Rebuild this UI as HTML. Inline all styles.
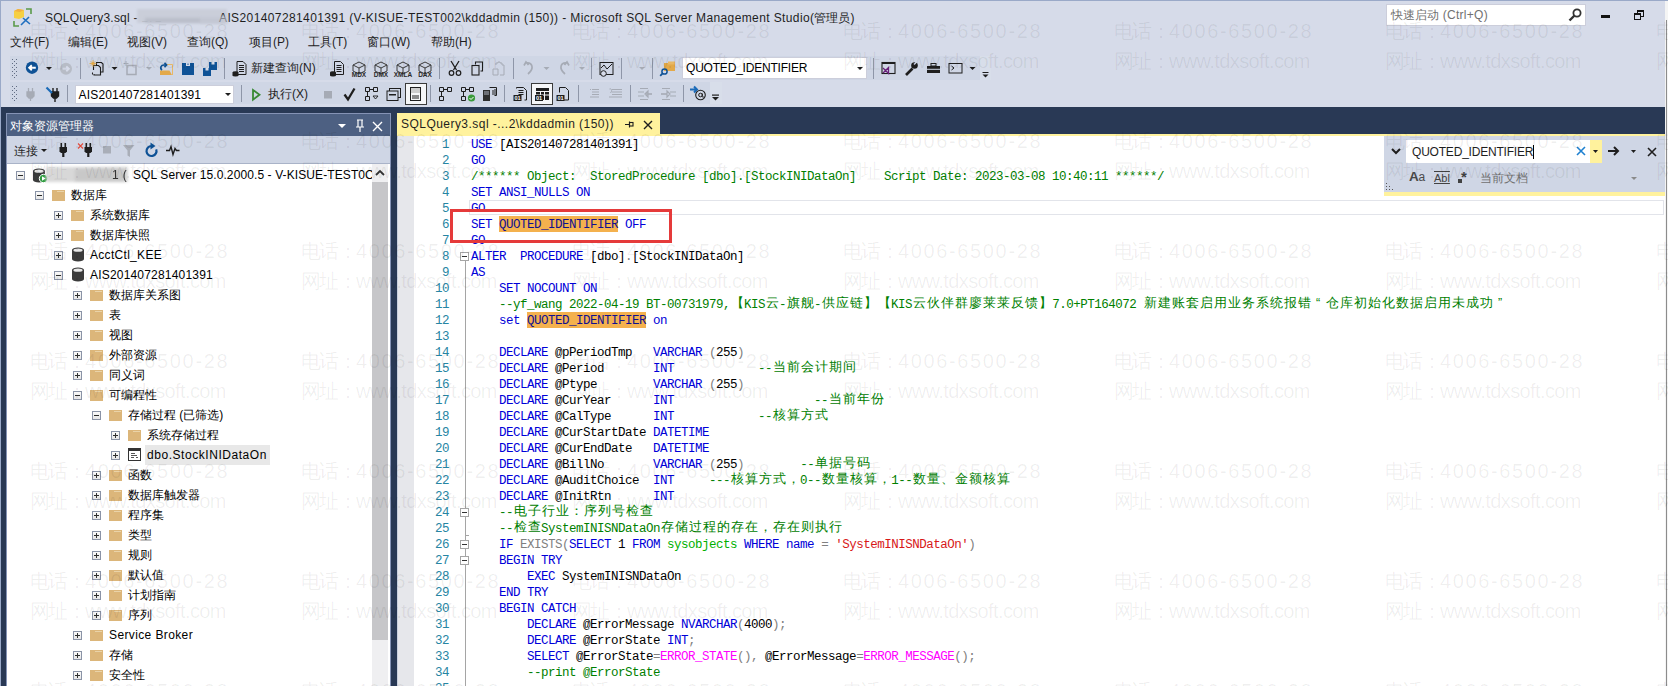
<!DOCTYPE html><html><head><meta charset="utf-8"><style>
*{margin:0;padding:0;box-sizing:border-box}
html,body{width:1668px;height:686px;overflow:hidden}
body{position:relative;background:#D6DBE9;font-family:"Liberation Sans",sans-serif;font-size:12px;color:#1E1E1E}
.a{position:absolute}
i{font-style:normal;display:inline-block;text-align:center}
.t{position:absolute;white-space:pre;line-height:14px;letter-spacing:.35px}
.tr{position:absolute;white-space:pre;line-height:14px;letter-spacing:.4px;color:#000}
.cd{position:absolute;left:471px;margin-top:1px;white-space:pre;font-family:"Liberation Mono",monospace;font-size:12.5px;letter-spacing:-0.5px;line-height:16px;color:#000}
.cd i{width:14px;font-family:"Liberation Sans",sans-serif;font-size:12.5px;letter-spacing:0;vertical-align:top;height:16px;line-height:16px;position:relative;top:-2px}
.ln{position:absolute;left:418px;margin-top:1px;width:31px;text-align:right;white-space:pre;font-family:"Liberation Mono",monospace;font-size:12.5px;letter-spacing:-0.5px;line-height:16px;color:#2685A3}
.k{color:#0000D8}.k.hl{color:#101090}.g{color:#808080}.c{color:#008000}.s{color:#D81818}.m{color:#FF00FF}.l{color:#00B000}
.hl{}
.ex{position:absolute;width:9px;height:9px;border:1px solid #8A93A6;background:linear-gradient(#FAFAFA,#E6E6E6)}
.ex:before{content:"";position:absolute;left:1px;top:3px;width:5px;height:1px;background:#2A2A2A}
.ex.p:after{content:"";position:absolute;left:3px;top:1px;width:1px;height:5px;background:#333}
.fd{position:absolute;width:13px;height:11px;background:#DCB67A;margin-top:1px}
.fd:before{content:"";position:absolute;left:5px;top:1px;width:7px;height:1px;background:#EAD3A8}
.fx{position:absolute;left:460px;width:9px;height:9px;border:1px solid #A5A5A5;background:#fff}
.fx:before{content:"";position:absolute;left:1px;top:3px;width:5px;height:1px;background:#333}
.wm{position:absolute;white-space:pre;font-size:20px;line-height:20px;color:rgba(0,0,0,.065);pointer-events:none;-webkit-text-stroke:.3px rgba(0,0,0,.03);letter-spacing:1.65px}
.wm i{width:18.3px;letter-spacing:0}
.sep{position:absolute;width:1px;background:#A8B1C6}
</style></head><body><div class="a" style="left:0;top:0;width:1668px;height:1px;background:#9AA9C8"></div><div class="a" style="left:0;top:0;width:1px;height:686px;background:#9AA9C8"></div><svg class="a" style="left:13px;top:8px" width="20" height="20" viewBox="0 0 20 20">
<path d="M1 3 L5 1 L11 2 L11 9 L6 11 L1 10 Z" fill="#F6CF43"/><path d="M5 1 L11 2 L7 4 L1 3Z" fill="#F1AE42"/>
<path d="M13 1h5v5" stroke="#5A9A4A" stroke-width="1.6" fill="none"/><path d="M1 13v5h5" stroke="#5A9A4A" stroke-width="1.6" fill="none"/>
<path d="M8 17 L16 9 M10 10 L17 16" stroke="#1F6FC0" stroke-width="1.6"/></svg><div class="t" style="left:45px;top:11px;letter-spacing:.22px">SQLQuery3.sql - 172</div><div class="a" style="left:137px;top:9px;width:90px;height:14px;background:#CACED9;filter:blur(1px)"></div><div class="a" style="left:145px;top:18px;width:80px;height:5px;background:#A9AEBB;filter:blur(1.5px);opacity:.5"></div><div class="t" style="left:219px;top:11px;letter-spacing:.39px">AIS201407281401391 (V-KISUE-TEST002\kddadmin (150)) - Microsoft SQL Server Management Studio(<i style="width:12px">管</i><i style="width:12px">理</i><i style="width:12px">员</i>)</div><div class="a" style="left:200px;top:16px;width:28px;height:8px;background:#C9CDD9;filter:blur(1px);opacity:.6"></div><div class="t" style="left:10px;top:35px;letter-spacing:0"><i style="width:12px">文</i><i style="width:12px">件</i>(F)</div><div class="t" style="left:68px;top:35px;letter-spacing:0"><i style="width:12px">编</i><i style="width:12px">辑</i>(E)</div><div class="t" style="left:127px;top:35px;letter-spacing:0"><i style="width:12px">视</i><i style="width:12px">图</i>(V)</div><div class="t" style="left:187px;top:35px;letter-spacing:0"><i style="width:12px">查</i><i style="width:12px">询</i>(Q)</div><div class="t" style="left:249px;top:35px;letter-spacing:0"><i style="width:12px">项</i><i style="width:12px">目</i>(P)</div><div class="t" style="left:308px;top:35px;letter-spacing:0"><i style="width:12px">工</i><i style="width:12px">具</i>(T)</div><div class="t" style="left:367px;top:35px;letter-spacing:0"><i style="width:12px">窗</i><i style="width:12px">口</i>(W)</div><div class="t" style="left:431px;top:35px;letter-spacing:0"><i style="width:12px">帮</i><i style="width:12px">助</i>(H)</div><div class="a" style="left:1386px;top:4px;width:200px;height:22px;background:#fff;border:1px solid #CCCEDB"></div><div class="t" style="left:1391px;top:8px;color:#717171;letter-spacing:.3px"><i style="width:12px">快</i><i style="width:12px">速</i><i style="width:12px">启</i><i style="width:12px">动</i> (Ctrl+Q)</div><svg class="a" style="left:1568px;top:8px" width="14" height="14"><circle cx="9" cy="5" r="3.6" stroke="#333" stroke-width="1.8" fill="none"/><path d="M6.5 7.5 L1.5 12.5" stroke="#333" stroke-width="2.4"/></svg><div class="a" style="left:1601px;top:15px;width:9px;height:3px;background:#111"></div><div class="a" style="left:1637px;top:10px;width:7px;height:7px;border:1.5px solid #111;border-top-width:2.5px"></div><div class="a" style="left:1634px;top:13px;width:7px;height:7px;border:1.5px solid #111;border-top-width:2.5px;background:#D6DBE9"></div><div class="a" style="left:10px;top:56px;width:970px;height:24px;background:#CFD6E5"></div><div class="a" style="left:10px;top:82px;width:700px;height:22px;background:#CFD6E5"></div><div class="a" style="left:980px;top:56px;width:11px;height:24px;background:#D8DEEA"></div><div class="a" style="left:710px;top:82px;width:12px;height:22px;background:#D8DEEA"></div><svg class="a" style="left:0;top:54px" width="1000" height="28"><rect x="12" y="5" width="1" height="1" fill="#5F6B82"/><rect x="16" y="5" width="1" height="1" fill="#5F6B82"/><rect x="14" y="7" width="1" height="1" fill="#5F6B82"/><rect x="12" y="9" width="1" height="1" fill="#5F6B82"/><rect x="16" y="9" width="1" height="1" fill="#5F6B82"/><rect x="14" y="11" width="1" height="1" fill="#5F6B82"/><rect x="12" y="13" width="1" height="1" fill="#5F6B82"/><rect x="16" y="13" width="1" height="1" fill="#5F6B82"/><rect x="14" y="15" width="1" height="1" fill="#5F6B82"/><rect x="12" y="17" width="1" height="1" fill="#5F6B82"/><rect x="16" y="17" width="1" height="1" fill="#5F6B82"/><rect x="14" y="19" width="1" height="1" fill="#5F6B82"/><rect x="12" y="21" width="1" height="1" fill="#5F6B82"/><rect x="16" y="21" width="1" height="1" fill="#5F6B82"/><rect x="14" y="23" width="1" height="1" fill="#5F6B82"/><circle cx="32" cy="13.7" r="6.2" fill="#0E5296"/><path d="M35.8 13.7h-6.2M31.8 11.2l-2.6 2.5l2.6 2.5" stroke="#fff" stroke-width="1.9" fill="none"/><path d="M46 13h6l-3.0 3.0z" fill="#1E1E1E"/><circle cx="66" cy="14.8" r="6" fill="#B7BCC6"/><path d="M62.5 14.8h6M66.3 12.4l2.5 2.4l-2.5 2.4" stroke="#D6DBE9" stroke-width="1.9" fill="none"/><rect x="80" y="4" width="1" height="21" fill="#8E96A8"/><path d="M96.5 11v-2.5h5l1.5 1.5v8h-2" fill="none" stroke="#1E1E1E" stroke-width="1.1"/><path d="M93.5 16v-4.5h5l2 2v7.5h-6.5v-1" fill="none" stroke="#1E1E1E" stroke-width="1.1"/><path d="M92.5 18.5v2" stroke="#1E1E1E" stroke-width="1.1"/><circle cx="93" cy="9.5" r="1.6" fill="#E3A949"/><path d="M93 6v7M89.5 9.5h7M90.8 7.3l4.4 4.4M95.2 7.3l-4.4 4.4" stroke="#E3A949" stroke-width=".8"/><path d="M111.5 13h6l-3.0 3.0z" fill="#1E1E1E"/><path d="M127 11.5h9v9h-9z" fill="none" stroke="#A6ABB5" stroke-width="1.5"/><path d="M126 7v5M123.5 9.5h5" stroke="#A6ABB5" stroke-width="1"/><path d="M146 13h6l-3.0 3.0z" fill="#A6ABB5"/><path d="M160 16.5h9.5l2.5 4.5h-12z" fill="#E3A949"/><path d="M166 10.5h6.5v10.5" stroke="#E8B866" stroke-width="1" fill="none"/><path d="M162 16c-2.5-2-1-5 2-5h1.5M164.5 8.8l2 2.2l-2 2.2" stroke="#0E5296" stroke-width="1.7" fill="none"/><path d="M182 9h12v12h-12z" fill="#0E5296"/><rect x="186" y="9" width="4" height="3" fill="#D6DBE9"/><rect x="187.5" y="9.5" width="1" height="1.5" fill="#0E5296"/><path d="M209 8h8v8h-8z" fill="#0E5296"/><rect x="211.5" y="8" width="3" height="2.5" fill="#D6DBE9"/><path d="M203 14h8v8h-8z" fill="#0E5296"/><rect x="205.5" y="14" width="3" height="2.5" fill="#D6DBE9"/><rect x="224" y="4" width="1" height="21" fill="#8E96A8"/><path d="M237.0 7.5h6l3 3v10h-9z" fill="none" stroke="#1E1E1E"/><path d="M239.0 11.5h5M239.0 13.5h5M239.0 15.5h5M239.0 17.5h5" stroke="#1E1E1E"/><ellipse cx="235.5" cy="18.5" rx="3" ry="1.2" fill="#1E1E1E"/><rect x="232.5" y="18.5" width="6" height="3" fill="#1E1E1E"/><ellipse cx="235.5" cy="21.3" rx="3" ry="1.2" fill="#1E1E1E"/><path d="M334.5 7.5h6l3 3v10h-9z" fill="none" stroke="#1E1E1E"/><path d="M336.5 11.5h5M336.5 13.5h5M336.5 15.5h5M336.5 17.5h5" stroke="#1E1E1E"/><ellipse cx="333" cy="18.5" rx="3" ry="1.2" fill="#1E1E1E"/><rect x="330" y="18.5" width="6" height="3" fill="#1E1E1E"/><ellipse cx="333" cy="21.3" rx="3" ry="1.2" fill="#1E1E1E"/><path d="M353 11l6-3l6 3v6l-6 3l-6-3z M353 11l6 3l6-3 M359 14v6" fill="none" stroke="#3A3A3A" stroke-width="1"/><text x="359" y="23" font-size="6.5" font-weight="bold" text-anchor="middle" fill="#2A2A2A" font-family="Liberation Sans">MDX</text><path d="M375 11l6-3l6 3v6l-6 3l-6-3z M375 11l6 3l6-3 M381 14v6" fill="none" stroke="#3A3A3A" stroke-width="1"/><text x="381" y="23" font-size="6.5" font-weight="bold" text-anchor="middle" fill="#2A2A2A" font-family="Liberation Sans">DMX</text><path d="M397 11l6-3l6 3v6l-6 3l-6-3z M397 11l6 3l6-3 M403 14v6" fill="none" stroke="#3A3A3A" stroke-width="1"/><text x="403" y="23" font-size="6.5" font-weight="bold" text-anchor="middle" fill="#2A2A2A" font-family="Liberation Sans">XMLA</text><path d="M419 11l6-3l6 3v6l-6 3l-6-3z M419 11l6 3l6-3 M425 14v6" fill="none" stroke="#3A3A3A" stroke-width="1"/><text x="425" y="23" font-size="6.5" font-weight="bold" text-anchor="middle" fill="#2A2A2A" font-family="Liberation Sans">DAX</text><rect x="439" y="4" width="1" height="21" fill="#8E96A8"/><path d="M451 7l5.5 9M459 7l-5.5 9" stroke="#1E1E1E" stroke-width="1.3"/><circle cx="451.5" cy="19" r="2.3" fill="none" stroke="#1E1E1E" stroke-width="1.2"/><circle cx="458.5" cy="19" r="2.3" fill="none" stroke="#1E1E1E" stroke-width="1.2"/><path d="M475.5 10.5v-2.5h7v9h-2" fill="none" stroke="#1E1E1E" stroke-width="1.1"/><rect x="472" y="11.5" width="7" height="9.5" fill="none" stroke="#1E1E1E" stroke-width="1.1"/><path d="M496 11v-2h2v-1h2v1h2v2h2v10h-4M493 15h5v6h-5z" fill="none" stroke="#A6ABB5" stroke-width="1"/><rect x="513" y="4" width="1" height="21" fill="#8E96A8"/><path d="M524 11.5l2-3.5l2.5 3M526 9c6-1 9 5 2 11" fill="none" stroke="#A6ABB5" stroke-width="1.7"/><path d="M543.5 13h6l-3.0 3.0z" fill="#A6ABB5"/><path d="M569 11.5l-2-3.5l-2.5 3M567 9c-6-1 -9 5 -2 11" fill="none" stroke="#A6ABB5" stroke-width="1.7"/><path d="M579 13h6l-3.0 3.0z" fill="#A6ABB5"/><rect x="591" y="4" width="1" height="21" fill="#8E96A8"/><rect x="600" y="8.5" width="13" height="12" fill="none" stroke="#1E1E1E" stroke-width="1"/><path d="M601 14l3-3l3 4l5-5" stroke="#1E1E1E" fill="none" stroke-width="1"/><circle cx="603.5" cy="19.5" r="2.8" fill="#D6DBE9" stroke="#1E1E1E" stroke-width="1"/><rect x="621" y="4" width="1" height="21" fill="#8E96A8"/><path d="M639 13h6l-3.0 3.0z" fill="#A6ABB5"/><rect x="652" y="4" width="1" height="21" fill="#8E96A8"/><rect x="664" y="9" width="11" height="8" fill="#E3A949"/><rect x="668" y="7.5" width="7" height="3" fill="#E8B866"/><circle cx="664.5" cy="17.5" r="2.6" fill="none" stroke="#0E5296" stroke-width="1.5"/><path d="M662.6 19.4l-2.4 2.4" stroke="#0E5296" stroke-width="1.8"/><rect x="873" y="4" width="1" height="21" fill="#8E96A8"/><rect x="882" y="8.5" width="13" height="11" fill="none" stroke="#1E1E1E" stroke-width="1.1"/><rect x="882" y="8" width="13" height="2" fill="#1E1E1E"/><path d="M883 14l2.5 2.5l-2.5 2.5M885.5 16.5l3-3v6z" stroke="#68217A" stroke-width="1.3" fill="none"/><path d="M906 21l6.5-6.5" stroke="#1E1E1E" stroke-width="2.6"/><circle cx="914.5" cy="11.5" r="3.3" fill="#1E1E1E"/><path d="M914 10.5l3-3" stroke="#CFD6E5" stroke-width="1.6"/><rect x="927" y="12" width="13" height="7" fill="#1E1E1E"/><rect x="931" y="9.5" width="5" height="2.5" fill="none" stroke="#1E1E1E" stroke-width="1"/><rect x="927" y="14.8" width="13" height="1" fill="#CFD6E5"/><rect x="949" y="9.5" width="13" height="9.5" fill="none" stroke="#1E1E1E" stroke-width="1"/><path d="M951.5 12l2.5 2l-2.5 2" stroke="#1E1E1E" fill="none" stroke-width="1"/><path d="M969.5 13h6l-3.0 3.0z" fill="#1E1E1E"/><rect x="982.5" y="18" width="6" height="1" fill="#1E1E1E"/><path d="M982.5 20.5h6l-3.0 3.0z" fill="#1E1E1E"/></svg><svg class="a" style="left:0;top:82px" width="740" height="24"><rect x="12" y="4" width="1" height="1" fill="#5F6B82"/><rect x="16" y="4" width="1" height="1" fill="#5F6B82"/><rect x="14" y="6" width="1" height="1" fill="#5F6B82"/><rect x="12" y="8" width="1" height="1" fill="#5F6B82"/><rect x="16" y="8" width="1" height="1" fill="#5F6B82"/><rect x="14" y="10" width="1" height="1" fill="#5F6B82"/><rect x="12" y="12" width="1" height="1" fill="#5F6B82"/><rect x="16" y="12" width="1" height="1" fill="#5F6B82"/><rect x="14" y="14" width="1" height="1" fill="#5F6B82"/><rect x="12" y="16" width="1" height="1" fill="#5F6B82"/><rect x="16" y="16" width="1" height="1" fill="#5F6B82"/><rect x="14" y="18" width="1" height="1" fill="#5F6B82"/><path d="M28.5 6v4M32.5 6v4M27 10h7v4l-2 2h-3l-2-2zM30.5 16v3" stroke="#A6ABB5" stroke-width="1.3" fill="#A6ABB5"/><path d="M53 6v4M57 6v4M51.5 10h7v4l-2 2h-3l-2-2zM55 16v4" stroke="#1E1E1E" stroke-width="1.4" fill="#1E1E1E"/><path d="M46.5 5.5l5.5 5.5" stroke="#1C6BB8" stroke-width="2.2"/><rect x="67" y="3" width="1" height="17" fill="#8E96A8"/><rect x="241" y="3" width="1" height="17" fill="#8E96A8"/><path d="M253 8l6.5 4.8l-6.5 4.8z" fill="none" stroke="#388A34" stroke-width="1.8"/><rect x="324" y="9" width="8" height="7.5" fill="#A6ABB5"/><path d="M344.5 12.5l3.5 5l6.5-11" stroke="#1E1E1E" stroke-width="2.3" fill="none"/><path d="M365.5 5.5h4v4h-4zM373.5 5.5h4v4h-4zM365.5 14.5h4v4h-4zM367.5 9.5v5M369.5 7.5h4" stroke="#1E1E1E" fill="none" stroke-width="1"/><path d="M373 14h5l-2.5 3z" fill="none" stroke="#1E1E1E" stroke-width=".9"/><rect x="389.5" y="6.5" width="11" height="9" fill="none" stroke="#1E1E1E"/><rect x="387" y="9" width="11" height="9.5" fill="#CFD6E5" stroke="#1E1E1E"/><rect x="389" y="12" width="7" height="1.5" fill="#1E1E1E"/><rect x="405.5" y="1.5" width="21" height="21" fill="#F5F6F8" stroke="#3A3A3A" stroke-width="1"/><rect x="410.5" y="5.5" width="10" height="13" fill="none" stroke="#1E1E1E"/><rect x="411" y="6" width="9" height="5" fill="#CCCCCC"/><path d="M412 14h7M412 16h7" stroke="#1E1E1E"/><rect x="430" y="3" width="1" height="17" fill="#8E96A8"/><path d="M439.5 5.5h4v4h-4zM447.5 5.5h4v4h-4zM439.5 14.5h4v4h-4zM441.5 9.5v5M443.5 7.5h4" stroke="#1E1E1E" fill="none" stroke-width="1"/><path d="M461.5 5.5h4v4h-4zM469.5 5.5h4v4h-4zM461.5 14.5h4v4h-4zM463.5 9.5v5M465.5 7.5h4" stroke="#1E1E1E" fill="none" stroke-width="1"/><circle cx="471.5" cy="16" r="3.6" fill="#3A9B3A"/><path d="M469.5 16l1.5 1.5l2.5-2.5" stroke="#fff" stroke-width="1" fill="none"/><rect x="483" y="8" width="7" height="11" fill="#2E2E2E"/><path d="M484 10h5M484 12h5" stroke="#CFD6E5" stroke-width=".8"/><path d="M489.5 5.5h7v8h-2M493 8v5M495 7v6" stroke="#1E1E1E" fill="none" stroke-width="1"/><rect x="504" y="3" width="1" height="17" fill="#8E96A8"/><path d="M516.5 6.5v-1h7l3 3v9.5h-2" fill="none" stroke="#1E1E1E"/><path d="M518.5 8.5h5M518.5 10.5h5M518.5 12.5h5" stroke="#1E1E1E"/><rect x="513.5" y="13" width="8" height="6" fill="#1E1E1E"/><text x="517.5" y="18.3" font-size="5.5" font-weight="bold" text-anchor="middle" fill="#fff" font-family="Liberation Sans">01</text><rect x="531.5" y="1.5" width="21" height="21" fill="#F5F6F8" stroke="#3A3A3A" stroke-width="1"/><rect x="536" y="6" width="13" height="12" fill="#1E1E1E"/><path d="M536 9.5h13M536 13h13M540.5 9v9M544.5 9v9" stroke="#F5F6F8" stroke-width="1"/><rect x="535" y="13" width="8" height="6" fill="#1E1E1E"/><text x="539" y="18.3" font-size="5.5" font-weight="bold" text-anchor="middle" fill="#fff" font-family="Liberation Sans">01</text><path d="M559.5 10.5v-5h6l3 3v9.5h-5" fill="none" stroke="#1E1E1E"/><rect x="556.5" y="13" width="8" height="6" fill="#1E1E1E"/><text x="560.5" y="18.3" font-size="5.5" font-weight="bold" text-anchor="middle" fill="#fff" font-family="Liberation Sans">01</text><rect x="578" y="3" width="1" height="17" fill="#8E96A8"/><path d="M590 7.5h1M592 7.5h7M592 10h7M592 12.5h7M590 15h9" stroke="#A6ABB5" stroke-width="1"/><path d="M612 7.5h10M612 10h10M612 12.5h10M609 15h13M609.5 7c2-1 3 2 1 4" stroke="#A6ABB5" stroke-width="1" fill="none"/><rect x="630" y="3" width="1" height="17" fill="#8E96A8"/><path d="M640 6.5h8M638 10h6M638 14h6M640 17.5h8M645 12l3-3v6z" stroke="#A6ABB5" stroke-width="1.2" fill="none"/><path d="M646 12h6" stroke="#A6ABB5" stroke-width="1.6"/><path d="M662 6.5h8M670 10h6M670 14h6M662 17.5h8M670 12l-3-3v6z" stroke="#A6ABB5" stroke-width="1.2" fill="none"/><path d="M661 12h6" stroke="#A6ABB5" stroke-width="1.6"/><rect x="683" y="3" width="1" height="17" fill="#8E96A8"/><path d="M690 7.5h6M694 4.5l3 3l-3 3" stroke="#1C6BB8" stroke-width="2" fill="none"/><circle cx="700.5" cy="13" r="4.8" fill="none" stroke="#1E1E1E" stroke-width="1.1"/><circle cx="700.5" cy="13" r="1.8" fill="none" stroke="#1E1E1E" stroke-width="1"/><path d="M702.3 11.5v3c0 1 1.5 1 1.8 0" stroke="#1E1E1E" fill="none" stroke-width="1"/><rect x="712" y="12.5" width="7" height="1.2" fill="#1E1E1E"/><path d="M712 15h7l-3.5 3.5z" fill="#1E1E1E"/></svg><div class="t" style="left:251px;top:61px;letter-spacing:0"><i style="width:12px">新</i><i style="width:12px">建</i><i style="width:12px">查</i><i style="width:12px">询</i>(N)</div><div class="t" style="left:268px;top:87px;letter-spacing:0"><i style="width:12px">执</i><i style="width:12px">行</i>(X)</div><div class="a" style="left:682px;top:57px;width:185px;height:22px;background:#fff;border:1px solid #CCCEDB"></div><div class="t" style="left:686px;top:61px;letter-spacing:-.2px;color:#000">QUOTED_IDENTIFIER</div><svg class="a" style="left:857px;top:67px" width="8" height="5"><path d="M0 0h6l-3 3z" fill="#1E1E1E"/></svg><div class="a" style="left:75px;top:85px;width:159px;height:19px;background:#fff;border:1px solid #CCCEDB"></div><div class="t" style="left:78.5px;top:88px;letter-spacing:.18px;color:#000">AIS201407281401391</div><svg class="a" style="left:225px;top:93px" width="8" height="5"><path d="M0 0h6l-3 3z" fill="#1E1E1E"/></svg><div class="a" style="left:1px;top:107px;width:1664px;height:579px;background:#293955"></div><div class="a" style="left:1665px;top:1px;width:3px;height:685px;background:#F4F4F4"></div><div class="a" style="left:1666px;top:20px;width:1px;height:666px;background:#8C8C8C"></div><div class="a" style="left:6px;top:113px;width:385px;height:573px;background:#CFD6E5;border:1px solid #4D6082"></div><div class="a" style="left:6px;top:113px;width:385px;height:23px;background:#4D6082;border:1px solid #8593B5;border-bottom:0"></div><div class="a" style="left:6px;top:136px;width:1px;height:550px;background:#8593B5"></div><div class="a" style="left:390px;top:136px;width:1px;height:550px;background:#8593B5"></div><div class="t" style="left:10px;top:119px;color:#fff"><i style="width:12px">对</i><i style="width:12px">象</i><i style="width:12px">资</i><i style="width:12px">源</i><i style="width:12px">管</i><i style="width:12px">理</i><i style="width:12px">器</i></div><svg class="a" style="left:336px;top:118px" width="50" height="16"><path d="M2 6h8l-4 4z" fill="#fff"/><path d="M21 2h6M22 2v7h4V2M20 9h8M24 9v5" stroke="#fff" stroke-width="1.2" fill="none"/><path d="M37 4l9 9M46 4l-9 9" stroke="#fff" stroke-width="1.4"/></svg><div class="a" style="left:7px;top:163px;width:383px;height:1px;background:#A9B3C8"></div><div class="a" style="left:7px;top:164px;width:383px;height:522px;background:#fff"></div><div class="t" style="left:14px;top:144px"><i style="width:12px">连</i><i style="width:12px">接</i></div><svg class="a" style="left:0;top:136px" width="200" height="28"><path d="M41 13h6l-3 3z" fill="#1E1E1E"/><rect x="60.5" y="7" width="1.6" height="4.5" fill="#1E1E1E"/><rect x="64.5" y="7" width="1.6" height="4.5" fill="#1E1E1E"/><path d="M59.5 11h7.5v4.5l-1.5 1.5h-4.5l-1.5-1.5z" fill="#1E1E1E"/><rect x="62.2" y="16.5" width="2.2" height="4.5" fill="#1E1E1E"/><path d="M78 7.5l5 5M83 7.5l-5 5" stroke="#E04A3A" stroke-width="1.1"/><rect x="85.5" y="7" width="1.6" height="4.5" fill="#1E1E1E"/><rect x="89.5" y="7" width="1.6" height="4.5" fill="#1E1E1E"/><path d="M84.5 11h7.5v4.5l-1.5 1.5h-4.5l-1.5-1.5z" fill="#1E1E1E"/><rect x="87.2" y="16.5" width="2.2" height="4.5" fill="#1E1E1E"/><rect x="103" y="10" width="8" height="7.5" fill="#A9AEB8"/><path d="M123 9h11.5l-4.5 5.5v6.5l-2.5-1.5v-5z" fill="#A9AEB8"/><path d="M151.5 10A5 5 0 1 0 156.2 13.3" stroke="#0E5296" stroke-width="2.2" fill="none"/><path d="M150.5 6.5L155.5 10L150.5 13.5z" fill="#0E5296"/><path d="M166 14.5h3.5l1.5-4l2 8l2-6l1.5 2h3" stroke="#1E1E1E" stroke-width="1.4" fill="none"/></svg><div class="a" style="left:8px;top:164px;width:364px;height:522px;overflow:hidden"><div class="ex" style="left:8px;top:7px"></div><svg class="a" style="left:25px;top:4px" width="15" height="15"><path d="M0 3a6 2.6 0 0 1 12 0v9a6 2.6 0 0 1 -12 0z" fill="#3B3B3B"/><ellipse cx="6" cy="3.2" rx="4.6" ry="1.6" fill="#E8E8E8"/><circle cx="10.5" cy="10.5" r="4.2" fill="#2E9B3E" stroke="#fff" stroke-width="1"/><path d="M9 8.2v4.6l3.6-2.3z" fill="#fff"/></svg><div class="a" style="left:38px;top:3px;width:82px;height:15px;background:#D8D8D8;filter:blur(1.5px)"></div><div class="a" style="left:67px;top:5px;width:50px;height:12px;background:#C8C8C8;filter:blur(1.5px)"></div><div class="tr" style="left:104px;top:4px;color:#333;filter:blur(.6px)">1 (</div><div class="tr" style="left:125px;top:4px;letter-spacing:0.1px">SQL Server 15.0.2000.5 - V-KISUE-TEST0C</div><div class="ex" style="left:27px;top:27px"></div><div class="fd" style="left:44px;top:25px"></div><div class="tr" style="left:63px;top:24px;letter-spacing:0px"><i style="width:12px">数</i><i style="width:12px">据</i><i style="width:12px">库</i></div><div class="ex p" style="left:46px;top:47px"></div><div class="fd" style="left:63px;top:45px"></div><div class="tr" style="left:82px;top:44px;letter-spacing:0px"><i style="width:12px">系</i><i style="width:12px">统</i><i style="width:12px">数</i><i style="width:12px">据</i><i style="width:12px">库</i></div><div class="ex p" style="left:46px;top:67px"></div><div class="fd" style="left:63px;top:65px"></div><div class="tr" style="left:82px;top:64px;letter-spacing:0px"><i style="width:12px">数</i><i style="width:12px">据</i><i style="width:12px">库</i><i style="width:12px">快</i><i style="width:12px">照</i></div><div class="ex p" style="left:46px;top:87px"></div><svg class="a" style="left:64px;top:83px" width="12" height="15"><path d="M0 3a6 2.6 0 0 1 12 0v9a6 2.6 0 0 1 -12 0z" fill="#3B3B3B"/><ellipse cx="6" cy="3.2" rx="4.6" ry="1.6" fill="#E8E8E8"/></svg><div class="tr" style="left:82px;top:84px;letter-spacing:0.3px">AcctCtl_KEE</div><div class="ex" style="left:46px;top:107px"></div><svg class="a" style="left:64px;top:103px" width="12" height="15"><path d="M0 3a6 2.6 0 0 1 12 0v9a6 2.6 0 0 1 -12 0z" fill="#3B3B3B"/><ellipse cx="6" cy="3.2" rx="4.6" ry="1.6" fill="#E8E8E8"/></svg><div class="tr" style="left:82px;top:104px;letter-spacing:0.19px">AIS201407281401391</div><div class="ex p" style="left:65px;top:127px"></div><div class="fd" style="left:82px;top:125px"></div><div class="tr" style="left:101px;top:124px;letter-spacing:0px"><i style="width:12px">数</i><i style="width:12px">据</i><i style="width:12px">库</i><i style="width:12px">关</i><i style="width:12px">系</i><i style="width:12px">图</i></div><div class="ex p" style="left:65px;top:147px"></div><div class="fd" style="left:82px;top:145px"></div><div class="tr" style="left:101px;top:144px;letter-spacing:0px"><i style="width:12px">表</i></div><div class="ex p" style="left:65px;top:167px"></div><div class="fd" style="left:82px;top:165px"></div><div class="tr" style="left:101px;top:164px;letter-spacing:0px"><i style="width:12px">视</i><i style="width:12px">图</i></div><div class="ex p" style="left:65px;top:187px"></div><div class="fd" style="left:82px;top:185px"></div><div class="tr" style="left:101px;top:184px;letter-spacing:0px"><i style="width:12px">外</i><i style="width:12px">部</i><i style="width:12px">资</i><i style="width:12px">源</i></div><div class="ex p" style="left:65px;top:207px"></div><div class="fd" style="left:82px;top:205px"></div><div class="tr" style="left:101px;top:204px;letter-spacing:0px"><i style="width:12px">同</i><i style="width:12px">义</i><i style="width:12px">词</i></div><div class="ex" style="left:65px;top:227px"></div><div class="fd" style="left:82px;top:225px"></div><div class="tr" style="left:101px;top:224px;letter-spacing:0px"><i style="width:12px">可</i><i style="width:12px">编</i><i style="width:12px">程</i><i style="width:12px">性</i></div><div class="ex" style="left:84px;top:247px"></div><div class="fd" style="left:101px;top:245px"></div><div class="tr" style="left:120px;top:244px;letter-spacing:0px"><i style="width:12px">存</i><i style="width:12px">储</i><i style="width:12px">过</i><i style="width:12px">程</i> (<i style="width:12px">已</i><i style="width:12px">筛</i><i style="width:12px">选</i>)</div><div class="ex p" style="left:103px;top:267px"></div><div class="fd" style="left:120px;top:265px"></div><div class="tr" style="left:139px;top:264px;letter-spacing:0px"><i style="width:12px">系</i><i style="width:12px">统</i><i style="width:12px">存</i><i style="width:12px">储</i><i style="width:12px">过</i><i style="width:12px">程</i></div><div class="ex p" style="left:103px;top:287px"></div><div class="a" style="left:137px;top:281px;width:125px;height:20px;background:#E8E8E8"></div><svg class="a" style="left:120px;top:284px" width="14" height="14"><rect x="0.5" y="0.5" width="12" height="12" fill="#fff" stroke="#333"/><rect x="1" y="1" width="11" height="2" fill="#333"/><path d="M3 5.5h4M3 7.5h6M3 9.5h3M8 9.5h2" stroke="#555"/></svg><div class="tr" style="left:139px;top:284px;letter-spacing:0.55px">dbo.StockINIDataOn</div><div class="ex p" style="left:84px;top:307px"></div><div class="fd" style="left:101px;top:305px"></div><div class="tr" style="left:120px;top:304px;letter-spacing:0px"><i style="width:12px">函</i><i style="width:12px">数</i></div><div class="ex p" style="left:84px;top:327px"></div><div class="fd" style="left:101px;top:325px"></div><div class="tr" style="left:120px;top:324px;letter-spacing:0px"><i style="width:12px">数</i><i style="width:12px">据</i><i style="width:12px">库</i><i style="width:12px">触</i><i style="width:12px">发</i><i style="width:12px">器</i></div><div class="ex p" style="left:84px;top:347px"></div><div class="fd" style="left:101px;top:345px"></div><div class="tr" style="left:120px;top:344px;letter-spacing:0px"><i style="width:12px">程</i><i style="width:12px">序</i><i style="width:12px">集</i></div><div class="ex p" style="left:84px;top:367px"></div><div class="fd" style="left:101px;top:365px"></div><div class="tr" style="left:120px;top:364px;letter-spacing:0px"><i style="width:12px">类</i><i style="width:12px">型</i></div><div class="ex p" style="left:84px;top:387px"></div><div class="fd" style="left:101px;top:385px"></div><div class="tr" style="left:120px;top:384px;letter-spacing:0px"><i style="width:12px">规</i><i style="width:12px">则</i></div><div class="ex p" style="left:84px;top:407px"></div><div class="fd" style="left:101px;top:405px"></div><div class="tr" style="left:120px;top:404px;letter-spacing:0px"><i style="width:12px">默</i><i style="width:12px">认</i><i style="width:12px">值</i></div><div class="ex p" style="left:84px;top:427px"></div><div class="fd" style="left:101px;top:425px"></div><div class="tr" style="left:120px;top:424px;letter-spacing:0px"><i style="width:12px">计</i><i style="width:12px">划</i><i style="width:12px">指</i><i style="width:12px">南</i></div><div class="ex p" style="left:84px;top:447px"></div><div class="fd" style="left:101px;top:445px"></div><div class="tr" style="left:120px;top:444px;letter-spacing:0px"><i style="width:12px">序</i><i style="width:12px">列</i></div><div class="ex p" style="left:65px;top:467px"></div><div class="fd" style="left:82px;top:465px"></div><div class="tr" style="left:101px;top:464px;letter-spacing:0.38px">Service Broker</div><div class="ex p" style="left:65px;top:487px"></div><div class="fd" style="left:82px;top:485px"></div><div class="tr" style="left:101px;top:484px;letter-spacing:0px"><i style="width:12px">存</i><i style="width:12px">储</i></div><div class="ex p" style="left:65px;top:507px"></div><div class="fd" style="left:82px;top:505px"></div><div class="tr" style="left:101px;top:504px;letter-spacing:0px"><i style="width:12px">安</i><i style="width:12px">全</i><i style="width:12px">性</i></div></div><div class="a" style="left:372px;top:164px;width:16px;height:522px;background:#EFEFF1"></div><div class="a" style="left:372px;top:182px;width:16px;height:458px;background:#C6C6C9"></div><svg class="a" style="left:374px;top:168px" width="12" height="10"><path d="M2 7l4-4l4 4" stroke="#333" stroke-width="1.8" fill="none"/></svg><div class="a" style="left:397px;top:113px;width:263px;height:23px;background:#FFF29D"></div><div class="t" style="left:401px;top:117px;letter-spacing:.46px">SQLQuery3.sql -...2\kddadmin (150))</div><svg class="a" style="left:622px;top:118px" width="36" height="14"><path d="M3 6.5h4M7.5 3.5v6" stroke="#1E1E1E" stroke-width="1.1" fill="none"/><rect x="7.5" y="4.5" width="3.5" height="3.5" fill="none" stroke="#1E1E1E" stroke-width="1.1"/><path d="M22 3l8 8M30 3l-8 8" stroke="#1E1E1E" stroke-width="1.4"/></svg><div class="a" style="left:397px;top:134px;width:1268px;height:2px;background:#FFF29D"></div><div class="a" style="left:397px;top:136px;width:1268px;height:550px;background:#fff"></div><div class="a" style="left:397px;top:136px;width:17px;height:550px;background:#E6E7EB"></div><div class="a" style="left:397px;top:136px;width:1px;height:550px;background:#C9D0DE"></div><div class="a" style="left:469px;top:200px;width:1195px;height:15px;border:1px solid #E2E4EA"></div><div class="a" style="left:499px;top:216px;width:119px;height:16px;background:#F4B14E"></div><div class="a" style="left:527px;top:312px;width:119px;height:16px;background:#F4B14E"></div><div class="ln" style="top:136px">1</div><div class="cd" style="top:136px"><span class="k">USE</span><span> [AIS201407281401391]</span></div><div class="ln" style="top:152px">2</div><div class="cd" style="top:152px"><span class="k">GO</span></div><div class="ln" style="top:168px">3</div><div class="cd" style="top:168px"><span class="c">/****** Object:  StoredProcedure [dbo].[StockINIDataOn]    Script Date: 2023-03-08 10:40:11 ******/</span></div><div class="ln" style="top:184px">4</div><div class="cd" style="top:184px"><span class="k">SET ANSI_NULLS ON</span></div><div class="ln" style="top:200px">5</div><div class="cd" style="top:200px"><span class="k">GO</span></div><div class="ln" style="top:216px">6</div><div class="cd" style="top:216px"><span class="k">SET </span><span class="k hl">QUOTED_IDENTIFIER</span><span class="k"> OFF</span></div><div class="ln" style="top:232px">7</div><div class="cd" style="top:232px"><span class="k">GO</span></div><div class="ln" style="top:248px">8</div><div class="cd" style="top:248px"><span class="k">ALTER  PROCEDURE </span><span>[dbo]</span><span class="g">.</span><span>[StockINIDataOn]</span></div><div class="ln" style="top:264px">9</div><div class="cd" style="top:264px"><span class="k">AS</span></div><div class="ln" style="top:280px">10</div><div class="cd" style="top:280px"><span>    </span><span class="k">SET NOCOUNT ON</span></div><div class="ln" style="top:296px">11</div><div class="cd" style="top:296px"><span>    </span><span class="c">--yf_wang 2022-04-19 BT-00731979,<i style="width:14px">【</i>KIS<i style="width:14px">云</i>-<i style="width:14px">旗</i><i style="width:14px">舰</i>-<i style="width:14px">供</i><i style="width:14px">应</i><i style="width:14px">链</i><i style="width:14px">】</i><i style="width:14px">【</i>KIS<i style="width:14px">云</i><i style="width:14px">伙</i><i style="width:14px">伴</i><i style="width:14px">群</i><i style="width:14px">廖</i><i style="width:14px">莱</i><i style="width:14px">莱</i><i style="width:14px">反</i><i style="width:14px">馈</i><i style="width:14px">】</i>7.0+PT164072 <i style="width:14px">新</i><i style="width:14px">建</i><i style="width:14px">账</i><i style="width:14px">套</i><i style="width:14px">启</i><i style="width:14px">用</i><i style="width:14px">业</i><i style="width:14px">务</i><i style="width:14px">系</i><i style="width:14px">统</i><i style="width:14px">报</i><i style="width:14px">错</i><i style="width:14px">“</i><i style="width:14px">仓</i><i style="width:14px">库</i><i style="width:14px">初</i><i style="width:14px">始</i><i style="width:14px">化</i><i style="width:14px">数</i><i style="width:14px">据</i><i style="width:14px">启</i><i style="width:14px">用</i><i style="width:14px">未</i><i style="width:14px">成</i><i style="width:14px">功</i><i style="width:14px">”</i></span></div><div class="ln" style="top:312px">12</div><div class="cd" style="top:312px"><span>    </span><span class="k">set </span><span class="k hl">QUOTED_IDENTIFIER</span><span class="k"> on</span></div><div class="ln" style="top:328px">13</div><div class="cd" style="top:328px"></div><div class="ln" style="top:344px">14</div><div class="cd" style="top:344px"><span>    </span><span class="k">DECLARE </span><span>@pPeriodTmp   </span><span class="k">VARCHAR </span><span class="g">(</span><span>255</span><span class="g">)</span></div><div class="ln" style="top:360px">15</div><div class="cd" style="top:360px"><span>    </span><span class="k">DECLARE </span><span>@Period       </span><span class="k">INT</span><span>            </span><span class="c">--<i style="width:14px">当</i><i style="width:14px">前</i><i style="width:14px">会</i><i style="width:14px">计</i><i style="width:14px">期</i><i style="width:14px">间</i></span></div><div class="ln" style="top:376px">16</div><div class="cd" style="top:376px"><span>    </span><span class="k">DECLARE </span><span>@Ptype        </span><span class="k">VARCHAR </span><span class="g">(</span><span>255</span><span class="g">)</span></div><div class="ln" style="top:392px">17</div><div class="cd" style="top:392px"><span>    </span><span class="k">DECLARE </span><span>@CurYear      </span><span class="k">INT</span><span>                    </span><span class="c">--<i style="width:14px">当</i><i style="width:14px">前</i><i style="width:14px">年</i><i style="width:14px">份</i></span></div><div class="ln" style="top:408px">18</div><div class="cd" style="top:408px"><span>    </span><span class="k">DECLARE </span><span>@CalType      </span><span class="k">INT</span><span>            </span><span class="c">--<i style="width:14px">核</i><i style="width:14px">算</i><i style="width:14px">方</i><i style="width:14px">式</i></span></div><div class="ln" style="top:424px">19</div><div class="cd" style="top:424px"><span>    </span><span class="k">DECLARE </span><span>@CurStartDate </span><span class="k">DATETIME</span></div><div class="ln" style="top:440px">20</div><div class="cd" style="top:440px"><span>    </span><span class="k">DECLARE </span><span>@CurEndDate   </span><span class="k">DATETIME</span></div><div class="ln" style="top:456px">21</div><div class="cd" style="top:456px"><span>    </span><span class="k">DECLARE </span><span>@BillNo       </span><span class="k">VARCHAR </span><span class="g">(</span><span>255</span><span class="g">)</span><span>        </span><span class="c">--<i style="width:14px">单</i><i style="width:14px">据</i><i style="width:14px">号</i><i style="width:14px">码</i></span></div><div class="ln" style="top:472px">22</div><div class="cd" style="top:472px"><span>    </span><span class="k">DECLARE </span><span>@AuditChoice  </span><span class="k">INT</span><span>     </span><span class="c">---<i style="width:14px">核</i><i style="width:14px">算</i><i style="width:14px">方</i><i style="width:14px">式</i><i style="width:14px">，</i>0--<i style="width:14px">数</i><i style="width:14px">量</i><i style="width:14px">核</i><i style="width:14px">算</i><i style="width:14px">，</i>1--<i style="width:14px">数</i><i style="width:14px">量</i><i style="width:14px">、</i><i style="width:14px">金</i><i style="width:14px">额</i><i style="width:14px">核</i><i style="width:14px">算</i></span></div><div class="ln" style="top:488px">23</div><div class="cd" style="top:488px"><span>    </span><span class="k">DECLARE </span><span>@InitRtn      </span><span class="k">INT</span></div><div class="ln" style="top:504px">24</div><div class="cd" style="top:504px"><span>    </span><span class="c">--<i style="width:14px">电</i><i style="width:14px">子</i><i style="width:14px">行</i><i style="width:14px">业</i><i style="width:14px">：</i><i style="width:14px">序</i><i style="width:14px">列</i><i style="width:14px">号</i><i style="width:14px">检</i><i style="width:14px">查</i></span></div><div class="ln" style="top:520px">25</div><div class="cd" style="top:520px"><span>    </span><span class="c">--<i style="width:14px">检</i><i style="width:14px">查</i>SystemINISNDataOn<i style="width:14px">存</i><i style="width:14px">储</i><i style="width:14px">过</i><i style="width:14px">程</i><i style="width:14px">的</i><i style="width:14px">存</i><i style="width:14px">在</i><i style="width:14px">，</i><i style="width:14px">存</i><i style="width:14px">在</i><i style="width:14px">则</i><i style="width:14px">执</i><i style="width:14px">行</i></span></div><div class="ln" style="top:536px">26</div><div class="cd" style="top:536px"><span>    </span><span class="k">IF </span><span class="g">EXISTS(</span><span class="k">SELECT </span><span>1 </span><span class="k">FROM </span><span class="l">sysobjects </span><span class="k">WHERE name </span><span class="g">= </span><span class="s">&#x27;SystemINISNDataOn&#x27;</span><span class="g">)</span></div><div class="ln" style="top:552px">27</div><div class="cd" style="top:552px"><span>    </span><span class="k">BEGIN TRY</span></div><div class="ln" style="top:568px">28</div><div class="cd" style="top:568px"><span>        </span><span class="k">EXEC </span><span>SystemINISNDataOn</span></div><div class="ln" style="top:584px">29</div><div class="cd" style="top:584px"><span>    </span><span class="k">END TRY</span></div><div class="ln" style="top:600px">30</div><div class="cd" style="top:600px"><span>    </span><span class="k">BEGIN CATCH</span></div><div class="ln" style="top:616px">31</div><div class="cd" style="top:616px"><span>        </span><span class="k">DECLARE </span><span>@ErrorMessage </span><span class="k">NVARCHAR</span><span class="g">(</span><span>4000</span><span class="g">);</span></div><div class="ln" style="top:632px">32</div><div class="cd" style="top:632px"><span>        </span><span class="k">DECLARE </span><span>@ErrorState </span><span class="k">INT</span><span class="g">;</span></div><div class="ln" style="top:648px">33</div><div class="cd" style="top:648px"><span>        </span><span class="k">SELECT </span><span>@ErrorState</span><span class="g">=</span><span class="m">ERROR_STATE</span><span class="g">(), </span><span>@ErrorMessage</span><span class="g">=</span><span class="m">ERROR_MESSAGE</span><span class="g">();</span></div><div class="ln" style="top:664px">34</div><div class="cd" style="top:664px"><span>        </span><span class="c">--print @ErrorState</span></div><div class="ln" style="top:680px">35</div><div class="cd" style="top:680px"></div><div class="a" style="left:465px;top:256px;width:1px;height:430px;background:#A5A5A5"></div><div class="a" style="left:465px;top:535px;width:4px;height:1px;background:#A5A5A5"></div><div class="fx" style="top:252px"></div><div class="fx" style="top:508px"></div><div class="fx" style="top:540px"></div><div class="fx" style="top:556px"></div><div class="a" style="left:450px;top:209px;width:222px;height:34px;border:3px solid #E53A3A"></div><div class="a" style="left:1384px;top:136px;width:281px;height:56px;background:#CFD6E5"></div><div class="a" style="left:1384px;top:192px;width:281px;height:4px;background:#FFF29D"></div><div class="a" style="left:1406px;top:140px;width:190px;height:23px;background:#fff"></div><div class="a" style="left:1590px;top:140px;width:12px;height:23px;background:#FFF29D"></div><div class="t" style="left:1412px;top:145px;color:#1E1E1E;letter-spacing:-.2px">QUOTED_IDENTIFIER<span style="display:inline-block;width:1px;height:14px;background:#000;vertical-align:-3px"></span></div><svg class="a" style="left:1388px;top:144px" width="280" height="44"><path d="M4 5l4 4l4-4" stroke="#1E1E1E" stroke-width="2" fill="none"/><path d="M189 3l8 8M197 3l-8 8" stroke="#1E80D0" stroke-width="1.6"/><path d="M205 6h5l-2.5 3z" fill="#1E1E1E"/><path d="M220 7h10M226 3l4 4l-4 4" stroke="#1E1E1E" stroke-width="2" fill="none"/><path d="M243 6h5l-2.5 3z" fill="#1E1E1E"/><path d="M260 4l8 8M268 4l-8 8" stroke="#1E1E1E" stroke-width="1.6"/><path d="M243 33h6l-3 3z" fill="#8A8A8A"/></svg><div class="t" style="left:1409px;top:170px;font-weight:bold;color:#4A4A4A;font-size:13.5px;letter-spacing:-.3px">A<span style="font-size:12px;font-weight:normal">a</span></div><div class="t" style="left:1434px;top:171px;color:#424242;font-size:11px;letter-spacing:0;text-decoration:underline overline">Abl</div><div class="a" style="left:1458px;top:179px;width:3.5px;height:3.5px;background:#424242"></div><div class="t" style="left:1461px;top:170px;color:#424242;font-size:15px;font-weight:bold;letter-spacing:0">*</div><div class="t" style="left:1480px;top:171px;color:#717171"><i style="width:12px">当</i><i style="width:12px">前</i><i style="width:12px">文</i><i style="width:12px">档</i></div><div class="a" style="left:1386px;top:183px;width:1px;height:1px;background:#555"></div><div class="a" style="left:1386px;top:186px;width:1px;height:1px;background:#555"></div><div class="a" style="left:1389px;top:186px;width:1px;height:1px;background:#555"></div><div class="a" style="left:1386px;top:189px;width:1px;height:1px;background:#555"></div><div class="a" style="left:1389px;top:189px;width:1px;height:1px;background:#555"></div><div class="a" style="left:1392px;top:189px;width:1px;height:1px;background:#555"></div><div class="wm" style="left:30px;top:21px"><i style="width:18.3px;font-size:20px">电</i><i style="width:18.3px;font-size:20px">话</i><i style="width:18.3px;font-size:20px">：</i>4006-6500-28</div><div class="wm" style="left:30px;top:51px;letter-spacing:-.6px"><i style="width:18.3px;font-size:20px">网</i><i style="width:18.3px;font-size:20px">址</i><i style="width:18.3px;font-size:20px">：</i>www.tdxsoft.com</div><div class="wm" style="left:301px;top:21px"><i style="width:18.3px;font-size:20px">电</i><i style="width:18.3px;font-size:20px">话</i><i style="width:18.3px;font-size:20px">：</i>4006-6500-28</div><div class="wm" style="left:301px;top:51px;letter-spacing:-.6px"><i style="width:18.3px;font-size:20px">网</i><i style="width:18.3px;font-size:20px">址</i><i style="width:18.3px;font-size:20px">：</i>www.tdxsoft.com</div><div class="wm" style="left:572px;top:21px"><i style="width:18.3px;font-size:20px">电</i><i style="width:18.3px;font-size:20px">话</i><i style="width:18.3px;font-size:20px">：</i>4006-6500-28</div><div class="wm" style="left:572px;top:51px;letter-spacing:-.6px"><i style="width:18.3px;font-size:20px">网</i><i style="width:18.3px;font-size:20px">址</i><i style="width:18.3px;font-size:20px">：</i>www.tdxsoft.com</div><div class="wm" style="left:843px;top:21px"><i style="width:18.3px;font-size:20px">电</i><i style="width:18.3px;font-size:20px">话</i><i style="width:18.3px;font-size:20px">：</i>4006-6500-28</div><div class="wm" style="left:843px;top:51px;letter-spacing:-.6px"><i style="width:18.3px;font-size:20px">网</i><i style="width:18.3px;font-size:20px">址</i><i style="width:18.3px;font-size:20px">：</i>www.tdxsoft.com</div><div class="wm" style="left:1114px;top:21px"><i style="width:18.3px;font-size:20px">电</i><i style="width:18.3px;font-size:20px">话</i><i style="width:18.3px;font-size:20px">：</i>4006-6500-28</div><div class="wm" style="left:1114px;top:51px;letter-spacing:-.6px"><i style="width:18.3px;font-size:20px">网</i><i style="width:18.3px;font-size:20px">址</i><i style="width:18.3px;font-size:20px">：</i>www.tdxsoft.com</div><div class="wm" style="left:1385px;top:21px"><i style="width:18.3px;font-size:20px">电</i><i style="width:18.3px;font-size:20px">话</i><i style="width:18.3px;font-size:20px">：</i>4006-6500-28</div><div class="wm" style="left:1385px;top:51px;letter-spacing:-.6px"><i style="width:18.3px;font-size:20px">网</i><i style="width:18.3px;font-size:20px">址</i><i style="width:18.3px;font-size:20px">：</i>www.tdxsoft.com</div><div class="wm" style="left:1656px;top:21px"><i style="width:18.3px;font-size:20px">电</i><i style="width:18.3px;font-size:20px">话</i><i style="width:18.3px;font-size:20px">：</i>4006-6500-28</div><div class="wm" style="left:1656px;top:51px;letter-spacing:-.6px"><i style="width:18.3px;font-size:20px">网</i><i style="width:18.3px;font-size:20px">址</i><i style="width:18.3px;font-size:20px">：</i>www.tdxsoft.com</div><div class="wm" style="left:30px;top:131px"><i style="width:18.3px;font-size:20px">电</i><i style="width:18.3px;font-size:20px">话</i><i style="width:18.3px;font-size:20px">：</i>4006-6500-28</div><div class="wm" style="left:30px;top:161px;letter-spacing:-.6px"><i style="width:18.3px;font-size:20px">网</i><i style="width:18.3px;font-size:20px">址</i><i style="width:18.3px;font-size:20px">：</i>www.tdxsoft.com</div><div class="wm" style="left:301px;top:131px"><i style="width:18.3px;font-size:20px">电</i><i style="width:18.3px;font-size:20px">话</i><i style="width:18.3px;font-size:20px">：</i>4006-6500-28</div><div class="wm" style="left:301px;top:161px;letter-spacing:-.6px"><i style="width:18.3px;font-size:20px">网</i><i style="width:18.3px;font-size:20px">址</i><i style="width:18.3px;font-size:20px">：</i>www.tdxsoft.com</div><div class="wm" style="left:572px;top:131px"><i style="width:18.3px;font-size:20px">电</i><i style="width:18.3px;font-size:20px">话</i><i style="width:18.3px;font-size:20px">：</i>4006-6500-28</div><div class="wm" style="left:572px;top:161px;letter-spacing:-.6px"><i style="width:18.3px;font-size:20px">网</i><i style="width:18.3px;font-size:20px">址</i><i style="width:18.3px;font-size:20px">：</i>www.tdxsoft.com</div><div class="wm" style="left:843px;top:131px"><i style="width:18.3px;font-size:20px">电</i><i style="width:18.3px;font-size:20px">话</i><i style="width:18.3px;font-size:20px">：</i>4006-6500-28</div><div class="wm" style="left:843px;top:161px;letter-spacing:-.6px"><i style="width:18.3px;font-size:20px">网</i><i style="width:18.3px;font-size:20px">址</i><i style="width:18.3px;font-size:20px">：</i>www.tdxsoft.com</div><div class="wm" style="left:1114px;top:131px"><i style="width:18.3px;font-size:20px">电</i><i style="width:18.3px;font-size:20px">话</i><i style="width:18.3px;font-size:20px">：</i>4006-6500-28</div><div class="wm" style="left:1114px;top:161px;letter-spacing:-.6px"><i style="width:18.3px;font-size:20px">网</i><i style="width:18.3px;font-size:20px">址</i><i style="width:18.3px;font-size:20px">：</i>www.tdxsoft.com</div><div class="wm" style="left:1385px;top:131px"><i style="width:18.3px;font-size:20px">电</i><i style="width:18.3px;font-size:20px">话</i><i style="width:18.3px;font-size:20px">：</i>4006-6500-28</div><div class="wm" style="left:1385px;top:161px;letter-spacing:-.6px"><i style="width:18.3px;font-size:20px">网</i><i style="width:18.3px;font-size:20px">址</i><i style="width:18.3px;font-size:20px">：</i>www.tdxsoft.com</div><div class="wm" style="left:1656px;top:131px"><i style="width:18.3px;font-size:20px">电</i><i style="width:18.3px;font-size:20px">话</i><i style="width:18.3px;font-size:20px">：</i>4006-6500-28</div><div class="wm" style="left:1656px;top:161px;letter-spacing:-.6px"><i style="width:18.3px;font-size:20px">网</i><i style="width:18.3px;font-size:20px">址</i><i style="width:18.3px;font-size:20px">：</i>www.tdxsoft.com</div><div class="wm" style="left:30px;top:241px"><i style="width:18.3px;font-size:20px">电</i><i style="width:18.3px;font-size:20px">话</i><i style="width:18.3px;font-size:20px">：</i>4006-6500-28</div><div class="wm" style="left:30px;top:271px;letter-spacing:-.6px"><i style="width:18.3px;font-size:20px">网</i><i style="width:18.3px;font-size:20px">址</i><i style="width:18.3px;font-size:20px">：</i>www.tdxsoft.com</div><div class="wm" style="left:301px;top:241px"><i style="width:18.3px;font-size:20px">电</i><i style="width:18.3px;font-size:20px">话</i><i style="width:18.3px;font-size:20px">：</i>4006-6500-28</div><div class="wm" style="left:301px;top:271px;letter-spacing:-.6px"><i style="width:18.3px;font-size:20px">网</i><i style="width:18.3px;font-size:20px">址</i><i style="width:18.3px;font-size:20px">：</i>www.tdxsoft.com</div><div class="wm" style="left:572px;top:241px"><i style="width:18.3px;font-size:20px">电</i><i style="width:18.3px;font-size:20px">话</i><i style="width:18.3px;font-size:20px">：</i>4006-6500-28</div><div class="wm" style="left:572px;top:271px;letter-spacing:-.6px"><i style="width:18.3px;font-size:20px">网</i><i style="width:18.3px;font-size:20px">址</i><i style="width:18.3px;font-size:20px">：</i>www.tdxsoft.com</div><div class="wm" style="left:843px;top:241px"><i style="width:18.3px;font-size:20px">电</i><i style="width:18.3px;font-size:20px">话</i><i style="width:18.3px;font-size:20px">：</i>4006-6500-28</div><div class="wm" style="left:843px;top:271px;letter-spacing:-.6px"><i style="width:18.3px;font-size:20px">网</i><i style="width:18.3px;font-size:20px">址</i><i style="width:18.3px;font-size:20px">：</i>www.tdxsoft.com</div><div class="wm" style="left:1114px;top:241px"><i style="width:18.3px;font-size:20px">电</i><i style="width:18.3px;font-size:20px">话</i><i style="width:18.3px;font-size:20px">：</i>4006-6500-28</div><div class="wm" style="left:1114px;top:271px;letter-spacing:-.6px"><i style="width:18.3px;font-size:20px">网</i><i style="width:18.3px;font-size:20px">址</i><i style="width:18.3px;font-size:20px">：</i>www.tdxsoft.com</div><div class="wm" style="left:1385px;top:241px"><i style="width:18.3px;font-size:20px">电</i><i style="width:18.3px;font-size:20px">话</i><i style="width:18.3px;font-size:20px">：</i>4006-6500-28</div><div class="wm" style="left:1385px;top:271px;letter-spacing:-.6px"><i style="width:18.3px;font-size:20px">网</i><i style="width:18.3px;font-size:20px">址</i><i style="width:18.3px;font-size:20px">：</i>www.tdxsoft.com</div><div class="wm" style="left:1656px;top:241px"><i style="width:18.3px;font-size:20px">电</i><i style="width:18.3px;font-size:20px">话</i><i style="width:18.3px;font-size:20px">：</i>4006-6500-28</div><div class="wm" style="left:1656px;top:271px;letter-spacing:-.6px"><i style="width:18.3px;font-size:20px">网</i><i style="width:18.3px;font-size:20px">址</i><i style="width:18.3px;font-size:20px">：</i>www.tdxsoft.com</div><div class="wm" style="left:30px;top:351px"><i style="width:18.3px;font-size:20px">电</i><i style="width:18.3px;font-size:20px">话</i><i style="width:18.3px;font-size:20px">：</i>4006-6500-28</div><div class="wm" style="left:30px;top:381px;letter-spacing:-.6px"><i style="width:18.3px;font-size:20px">网</i><i style="width:18.3px;font-size:20px">址</i><i style="width:18.3px;font-size:20px">：</i>www.tdxsoft.com</div><div class="wm" style="left:301px;top:351px"><i style="width:18.3px;font-size:20px">电</i><i style="width:18.3px;font-size:20px">话</i><i style="width:18.3px;font-size:20px">：</i>4006-6500-28</div><div class="wm" style="left:301px;top:381px;letter-spacing:-.6px"><i style="width:18.3px;font-size:20px">网</i><i style="width:18.3px;font-size:20px">址</i><i style="width:18.3px;font-size:20px">：</i>www.tdxsoft.com</div><div class="wm" style="left:572px;top:351px"><i style="width:18.3px;font-size:20px">电</i><i style="width:18.3px;font-size:20px">话</i><i style="width:18.3px;font-size:20px">：</i>4006-6500-28</div><div class="wm" style="left:572px;top:381px;letter-spacing:-.6px"><i style="width:18.3px;font-size:20px">网</i><i style="width:18.3px;font-size:20px">址</i><i style="width:18.3px;font-size:20px">：</i>www.tdxsoft.com</div><div class="wm" style="left:843px;top:351px"><i style="width:18.3px;font-size:20px">电</i><i style="width:18.3px;font-size:20px">话</i><i style="width:18.3px;font-size:20px">：</i>4006-6500-28</div><div class="wm" style="left:843px;top:381px;letter-spacing:-.6px"><i style="width:18.3px;font-size:20px">网</i><i style="width:18.3px;font-size:20px">址</i><i style="width:18.3px;font-size:20px">：</i>www.tdxsoft.com</div><div class="wm" style="left:1114px;top:351px"><i style="width:18.3px;font-size:20px">电</i><i style="width:18.3px;font-size:20px">话</i><i style="width:18.3px;font-size:20px">：</i>4006-6500-28</div><div class="wm" style="left:1114px;top:381px;letter-spacing:-.6px"><i style="width:18.3px;font-size:20px">网</i><i style="width:18.3px;font-size:20px">址</i><i style="width:18.3px;font-size:20px">：</i>www.tdxsoft.com</div><div class="wm" style="left:1385px;top:351px"><i style="width:18.3px;font-size:20px">电</i><i style="width:18.3px;font-size:20px">话</i><i style="width:18.3px;font-size:20px">：</i>4006-6500-28</div><div class="wm" style="left:1385px;top:381px;letter-spacing:-.6px"><i style="width:18.3px;font-size:20px">网</i><i style="width:18.3px;font-size:20px">址</i><i style="width:18.3px;font-size:20px">：</i>www.tdxsoft.com</div><div class="wm" style="left:1656px;top:351px"><i style="width:18.3px;font-size:20px">电</i><i style="width:18.3px;font-size:20px">话</i><i style="width:18.3px;font-size:20px">：</i>4006-6500-28</div><div class="wm" style="left:1656px;top:381px;letter-spacing:-.6px"><i style="width:18.3px;font-size:20px">网</i><i style="width:18.3px;font-size:20px">址</i><i style="width:18.3px;font-size:20px">：</i>www.tdxsoft.com</div><div class="wm" style="left:30px;top:461px"><i style="width:18.3px;font-size:20px">电</i><i style="width:18.3px;font-size:20px">话</i><i style="width:18.3px;font-size:20px">：</i>4006-6500-28</div><div class="wm" style="left:30px;top:491px;letter-spacing:-.6px"><i style="width:18.3px;font-size:20px">网</i><i style="width:18.3px;font-size:20px">址</i><i style="width:18.3px;font-size:20px">：</i>www.tdxsoft.com</div><div class="wm" style="left:301px;top:461px"><i style="width:18.3px;font-size:20px">电</i><i style="width:18.3px;font-size:20px">话</i><i style="width:18.3px;font-size:20px">：</i>4006-6500-28</div><div class="wm" style="left:301px;top:491px;letter-spacing:-.6px"><i style="width:18.3px;font-size:20px">网</i><i style="width:18.3px;font-size:20px">址</i><i style="width:18.3px;font-size:20px">：</i>www.tdxsoft.com</div><div class="wm" style="left:572px;top:461px"><i style="width:18.3px;font-size:20px">电</i><i style="width:18.3px;font-size:20px">话</i><i style="width:18.3px;font-size:20px">：</i>4006-6500-28</div><div class="wm" style="left:572px;top:491px;letter-spacing:-.6px"><i style="width:18.3px;font-size:20px">网</i><i style="width:18.3px;font-size:20px">址</i><i style="width:18.3px;font-size:20px">：</i>www.tdxsoft.com</div><div class="wm" style="left:843px;top:461px"><i style="width:18.3px;font-size:20px">电</i><i style="width:18.3px;font-size:20px">话</i><i style="width:18.3px;font-size:20px">：</i>4006-6500-28</div><div class="wm" style="left:843px;top:491px;letter-spacing:-.6px"><i style="width:18.3px;font-size:20px">网</i><i style="width:18.3px;font-size:20px">址</i><i style="width:18.3px;font-size:20px">：</i>www.tdxsoft.com</div><div class="wm" style="left:1114px;top:461px"><i style="width:18.3px;font-size:20px">电</i><i style="width:18.3px;font-size:20px">话</i><i style="width:18.3px;font-size:20px">：</i>4006-6500-28</div><div class="wm" style="left:1114px;top:491px;letter-spacing:-.6px"><i style="width:18.3px;font-size:20px">网</i><i style="width:18.3px;font-size:20px">址</i><i style="width:18.3px;font-size:20px">：</i>www.tdxsoft.com</div><div class="wm" style="left:1385px;top:461px"><i style="width:18.3px;font-size:20px">电</i><i style="width:18.3px;font-size:20px">话</i><i style="width:18.3px;font-size:20px">：</i>4006-6500-28</div><div class="wm" style="left:1385px;top:491px;letter-spacing:-.6px"><i style="width:18.3px;font-size:20px">网</i><i style="width:18.3px;font-size:20px">址</i><i style="width:18.3px;font-size:20px">：</i>www.tdxsoft.com</div><div class="wm" style="left:1656px;top:461px"><i style="width:18.3px;font-size:20px">电</i><i style="width:18.3px;font-size:20px">话</i><i style="width:18.3px;font-size:20px">：</i>4006-6500-28</div><div class="wm" style="left:1656px;top:491px;letter-spacing:-.6px"><i style="width:18.3px;font-size:20px">网</i><i style="width:18.3px;font-size:20px">址</i><i style="width:18.3px;font-size:20px">：</i>www.tdxsoft.com</div><div class="wm" style="left:30px;top:571px"><i style="width:18.3px;font-size:20px">电</i><i style="width:18.3px;font-size:20px">话</i><i style="width:18.3px;font-size:20px">：</i>4006-6500-28</div><div class="wm" style="left:30px;top:601px;letter-spacing:-.6px"><i style="width:18.3px;font-size:20px">网</i><i style="width:18.3px;font-size:20px">址</i><i style="width:18.3px;font-size:20px">：</i>www.tdxsoft.com</div><div class="wm" style="left:301px;top:571px"><i style="width:18.3px;font-size:20px">电</i><i style="width:18.3px;font-size:20px">话</i><i style="width:18.3px;font-size:20px">：</i>4006-6500-28</div><div class="wm" style="left:301px;top:601px;letter-spacing:-.6px"><i style="width:18.3px;font-size:20px">网</i><i style="width:18.3px;font-size:20px">址</i><i style="width:18.3px;font-size:20px">：</i>www.tdxsoft.com</div><div class="wm" style="left:572px;top:571px"><i style="width:18.3px;font-size:20px">电</i><i style="width:18.3px;font-size:20px">话</i><i style="width:18.3px;font-size:20px">：</i>4006-6500-28</div><div class="wm" style="left:572px;top:601px;letter-spacing:-.6px"><i style="width:18.3px;font-size:20px">网</i><i style="width:18.3px;font-size:20px">址</i><i style="width:18.3px;font-size:20px">：</i>www.tdxsoft.com</div><div class="wm" style="left:843px;top:571px"><i style="width:18.3px;font-size:20px">电</i><i style="width:18.3px;font-size:20px">话</i><i style="width:18.3px;font-size:20px">：</i>4006-6500-28</div><div class="wm" style="left:843px;top:601px;letter-spacing:-.6px"><i style="width:18.3px;font-size:20px">网</i><i style="width:18.3px;font-size:20px">址</i><i style="width:18.3px;font-size:20px">：</i>www.tdxsoft.com</div><div class="wm" style="left:1114px;top:571px"><i style="width:18.3px;font-size:20px">电</i><i style="width:18.3px;font-size:20px">话</i><i style="width:18.3px;font-size:20px">：</i>4006-6500-28</div><div class="wm" style="left:1114px;top:601px;letter-spacing:-.6px"><i style="width:18.3px;font-size:20px">网</i><i style="width:18.3px;font-size:20px">址</i><i style="width:18.3px;font-size:20px">：</i>www.tdxsoft.com</div><div class="wm" style="left:1385px;top:571px"><i style="width:18.3px;font-size:20px">电</i><i style="width:18.3px;font-size:20px">话</i><i style="width:18.3px;font-size:20px">：</i>4006-6500-28</div><div class="wm" style="left:1385px;top:601px;letter-spacing:-.6px"><i style="width:18.3px;font-size:20px">网</i><i style="width:18.3px;font-size:20px">址</i><i style="width:18.3px;font-size:20px">：</i>www.tdxsoft.com</div><div class="wm" style="left:1656px;top:571px"><i style="width:18.3px;font-size:20px">电</i><i style="width:18.3px;font-size:20px">话</i><i style="width:18.3px;font-size:20px">：</i>4006-6500-28</div><div class="wm" style="left:1656px;top:601px;letter-spacing:-.6px"><i style="width:18.3px;font-size:20px">网</i><i style="width:18.3px;font-size:20px">址</i><i style="width:18.3px;font-size:20px">：</i>www.tdxsoft.com</div><div class="wm" style="left:30px;top:681px"><i style="width:18.3px;font-size:20px">电</i><i style="width:18.3px;font-size:20px">话</i><i style="width:18.3px;font-size:20px">：</i>4006-6500-28</div><div class="wm" style="left:30px;top:711px;letter-spacing:-.6px"><i style="width:18.3px;font-size:20px">网</i><i style="width:18.3px;font-size:20px">址</i><i style="width:18.3px;font-size:20px">：</i>www.tdxsoft.com</div><div class="wm" style="left:301px;top:681px"><i style="width:18.3px;font-size:20px">电</i><i style="width:18.3px;font-size:20px">话</i><i style="width:18.3px;font-size:20px">：</i>4006-6500-28</div><div class="wm" style="left:301px;top:711px;letter-spacing:-.6px"><i style="width:18.3px;font-size:20px">网</i><i style="width:18.3px;font-size:20px">址</i><i style="width:18.3px;font-size:20px">：</i>www.tdxsoft.com</div><div class="wm" style="left:572px;top:681px"><i style="width:18.3px;font-size:20px">电</i><i style="width:18.3px;font-size:20px">话</i><i style="width:18.3px;font-size:20px">：</i>4006-6500-28</div><div class="wm" style="left:572px;top:711px;letter-spacing:-.6px"><i style="width:18.3px;font-size:20px">网</i><i style="width:18.3px;font-size:20px">址</i><i style="width:18.3px;font-size:20px">：</i>www.tdxsoft.com</div><div class="wm" style="left:843px;top:681px"><i style="width:18.3px;font-size:20px">电</i><i style="width:18.3px;font-size:20px">话</i><i style="width:18.3px;font-size:20px">：</i>4006-6500-28</div><div class="wm" style="left:843px;top:711px;letter-spacing:-.6px"><i style="width:18.3px;font-size:20px">网</i><i style="width:18.3px;font-size:20px">址</i><i style="width:18.3px;font-size:20px">：</i>www.tdxsoft.com</div><div class="wm" style="left:1114px;top:681px"><i style="width:18.3px;font-size:20px">电</i><i style="width:18.3px;font-size:20px">话</i><i style="width:18.3px;font-size:20px">：</i>4006-6500-28</div><div class="wm" style="left:1114px;top:711px;letter-spacing:-.6px"><i style="width:18.3px;font-size:20px">网</i><i style="width:18.3px;font-size:20px">址</i><i style="width:18.3px;font-size:20px">：</i>www.tdxsoft.com</div><div class="wm" style="left:1385px;top:681px"><i style="width:18.3px;font-size:20px">电</i><i style="width:18.3px;font-size:20px">话</i><i style="width:18.3px;font-size:20px">：</i>4006-6500-28</div><div class="wm" style="left:1385px;top:711px;letter-spacing:-.6px"><i style="width:18.3px;font-size:20px">网</i><i style="width:18.3px;font-size:20px">址</i><i style="width:18.3px;font-size:20px">：</i>www.tdxsoft.com</div><div class="wm" style="left:1656px;top:681px"><i style="width:18.3px;font-size:20px">电</i><i style="width:18.3px;font-size:20px">话</i><i style="width:18.3px;font-size:20px">：</i>4006-6500-28</div><div class="wm" style="left:1656px;top:711px;letter-spacing:-.6px"><i style="width:18.3px;font-size:20px">网</i><i style="width:18.3px;font-size:20px">址</i><i style="width:18.3px;font-size:20px">：</i>www.tdxsoft.com</div></body></html>
